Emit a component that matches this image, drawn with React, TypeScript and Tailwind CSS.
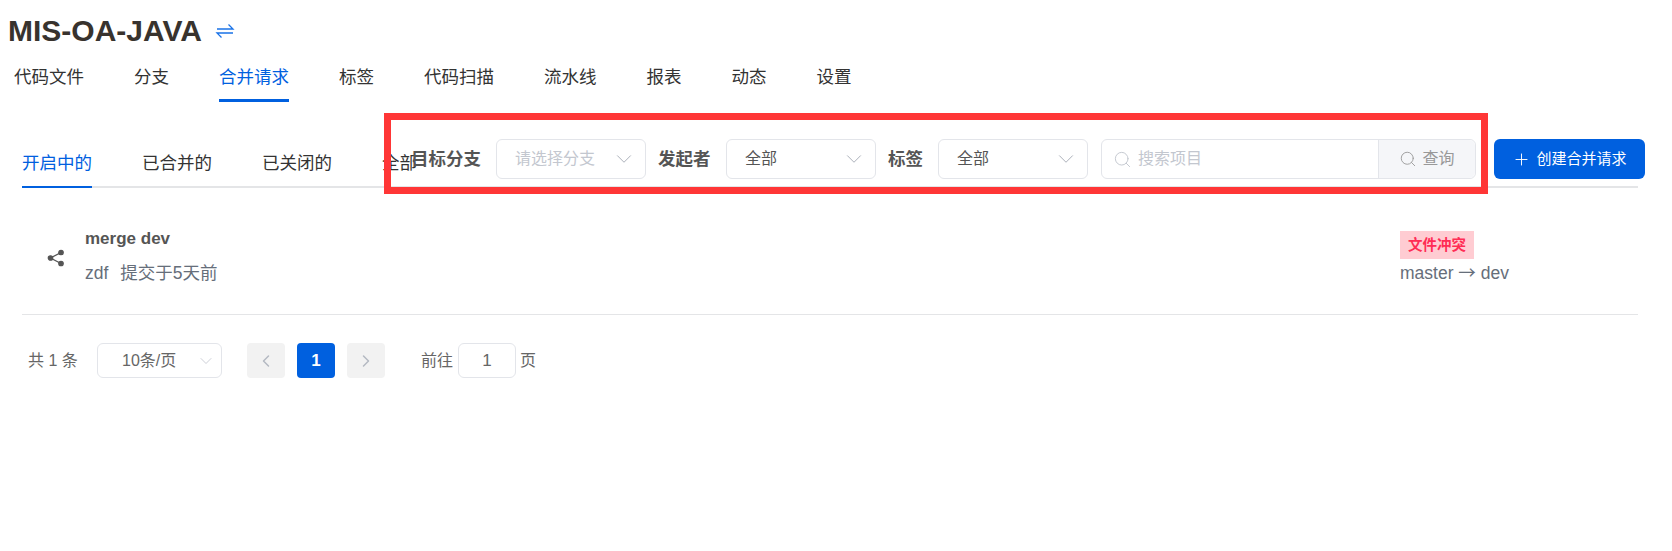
import { ChevronDown, ChevronLeft, ChevronRight, Plus, Search } from 'lucide-react'

const font = "font-['Liberation_Sans','Noto_Sans_CJK_SC',sans-serif]"
const mainTabs = ['代码文件', '分支', '合并请求', '标签', '代码扫描', '流水线', '报表', '动态', '设置']
const stateTabs = ['开启中的', '已合并的', '已关闭的', '全部']

function FilterSelect({ text, placeholder }: { text: string; placeholder?: boolean }) {
  return (
    <div className="flex h-10 w-[150px] items-center justify-between rounded-md border border-[#e3e5ea] bg-white pl-[18px] pr-[8px]">
      <span className={`text-[16px] ${placeholder ? 'text-[#c3c7cf]' : 'text-[#555]'}`}>{text}</span>
      <ChevronDown size={26} strokeWidth={0.9} className="text-[#a9aeb8]" />
    </div>
  )
}

export default function App() {
  return (
    <div className={`${font} relative h-[551px] w-[1672px] overflow-hidden bg-white text-[#333]`}>
      <div className="flex items-center pl-2 pt-[13px]">
        <h1 className="text-[30px] font-bold leading-[36px] text-[#38332e]">MIS-OA-JAVA</h1>
        <svg width="20" height="20" viewBox="0 0 20 20" fill="none" stroke="#1a73e8" strokeWidth="1.3" className="ml-[13px]">
          <path d="M2 8h16L13.5 3.5M18 12H2l4.5 4.5" />
        </svg>
      </div>

      <nav className="mt-[6px] flex gap-[50px] pl-[14px]">
        {mainTabs.map((tab) => (
          <div
            key={tab}
            className={`h-[47px] border-b-[3px] pt-[9px] text-[17.5px] leading-[26px] ${
              tab === '合并请求' ? 'border-[#0060df] text-[#0060df]' : 'border-transparent text-[#333]'
            }`}
          >
            {tab}
          </div>
        ))}
      </nav>

      <div className="relative mx-[22px] mt-[36px] flex h-[50px] w-[1616px] gap-[50px] border-b-2 border-[#e4e5e7]">
        {stateTabs.map((tab, i) => (
          <div
            key={tab}
            className={`-mb-[2px] h-[50px] pt-[12px] text-[17.5px] leading-[26px] ${
              i === 0 ? 'border-b-2 border-[#0060df] text-[#0060df]' : 'text-[#333]'
            }`}
          >
            {tab}
          </div>
        ))}

        <div className="absolute left-[389px] top-[1px] flex items-center bg-transparent">
          <span className="w-[85px] text-[17.5px] font-bold text-[#555]">目标分支</span>
          <FilterSelect text="请选择分支" placeholder />
          <span className="ml-3 w-[68px] text-[17.5px] font-bold text-[#555]">发起者</span>
          <FilterSelect text="全部" />
          <span className="ml-3 w-[50px] text-[17.5px] font-bold text-[#555]">标签</span>
          <FilterSelect text="全部" />
          <div className="ml-[13px] flex h-10 w-[375px] items-center rounded-md border border-[#e3e5ea]">
            <div className="flex flex-1 items-center gap-[6px] pl-[11px] text-[16px] text-[#c3c7cf]">
              <Search size={19} strokeWidth={1.2} />
              搜索项目
            </div>
            <div className="flex h-full w-[97px] items-center justify-center gap-[5px] rounded-r-md border-l border-[#e3e5ea] bg-[#f5f6f9] text-[16px] text-[#999]">
              <Search size={18} strokeWidth={1.2} />
              查询
            </div>
          </div>
          <button className="ml-[18px] flex h-10 w-[151px] items-center justify-center gap-[5px] rounded-md bg-[#0060df] text-[15px] text-white">
            <Plus size={19} strokeWidth={1.2} />
            创建合并请求
          </button>
        </div>
      </div>

      <div className="mx-[22px] flex h-[127px] w-[1616px] items-center border-b border-[#e4e5e7] pl-[25px]">
        <svg width="18" height="18" viewBox="0 0 18 18" fill="#555" stroke="#555" strokeWidth="1.3" className="mt-[14px]">
          <circle cx="14" cy="3.5" r="2.2" />
          <circle cx="3.5" cy="9" r="2.2" />
          <circle cx="14" cy="14.5" r="2.2" />
          <path d="M14 3.5 3.5 9 14 14.5" fill="none" />
        </svg>
        <div className="ml-[20px] mt-[10px] flex-1">
          <div className="text-[17px] font-bold leading-5 text-[#555]">merge dev</div>
          <div className="mt-[14px] flex gap-3 text-[17.5px] leading-5 text-[#666e7a]">
            <span>zdf</span>
            <span>提交于5天前</span>
          </div>
        </div>
        <div className="mr-[98px] mt-[12px] w-[140px]">
          <span className="inline-block h-[28px] bg-[#ffccd2] px-2 text-[14.5px] font-bold leading-[28px] text-[#ff2d55]">文件冲突</span>
          <div className="mt-[3px] text-[17.5px] leading-5 text-[#666e7a]">
            master <span className="font-['Noto_Sans_CJK_SC',sans-serif]">→</span> dev
          </div>
        </div>
      </div>

      <div className="ml-[28px] mt-[28px] flex h-[35px] items-center text-[16px] text-[#666]">
        <span className="w-[69px]">共 1 条</span>
        <div className="flex h-[35px] w-[125px] items-center justify-between rounded-md border border-[#e3e5ea] pl-[24px] pr-[5px]">
          10条/页
          <ChevronDown size={20} strokeWidth={1} className="text-[#c3c7cf]" />
        </div>
        <div className="ml-[25px] flex h-[35px] w-[38px] items-center justify-center rounded bg-[#f2f2f2] text-[#b4b9c2]">
          <ChevronLeft size={20} strokeWidth={1.8} />
        </div>
        <div className="ml-3 flex h-[35px] w-[38px] items-center justify-center rounded bg-[#0060df] text-[17px] font-bold text-white">1</div>
        <div className="ml-3 flex h-[35px] w-[38px] items-center justify-center rounded bg-[#f2f2f2] text-[#b4b9c2]">
          <ChevronRight size={20} strokeWidth={1.8} />
        </div>
        <span className="ml-9">前往</span>
        <div className="ml-[5px] flex h-[35px] w-[58px] items-center justify-center rounded-md border border-[#e3e5ea] text-[17px]">1</div>
        <span className="ml-1">页</span>
      </div>

      {/* red annotation box drawn on the screenshot */}
      <div className="absolute left-[384px] top-[113px] h-[81px] w-[1104px] border-[7px] border-[#ff3636]" />
    </div>
  )
}
